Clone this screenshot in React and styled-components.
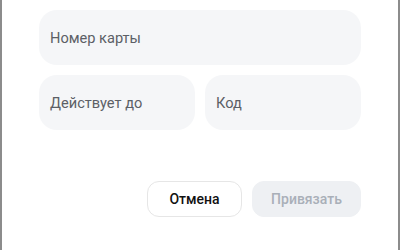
import styled, { createGlobalStyle } from "styled-components";

const Global = createGlobalStyle`
  html, body { margin: 0; padding: 0; background: #fff; }
  body { font-family: Roboto, "Liberation Sans", Arial, sans-serif; }
`;

const Frame = styled.div`
  box-sizing: border-box;
  width: 400px; height: 250px;
  border-left: 2px solid #8c8c8c; border-right: 2px solid #8c8c8c;
  padding: 10px 37px 0;
  display: flex; flex-direction: column;
`;
const Fields = styled.div`
  display: grid; grid-template-columns: 1fr 1fr; gap: 10px;
`;
const Field = styled.div`
  grid-column: ${p => (p.$wide ? "1 / -1" : "auto")};
  height: 55px; border-radius: 18px; background: #f5f6f8;
  display: flex; align-items: center; padding: 0 11px;
  font-size: 14.6px; color: #5c5f66;
`;
const Actions = styled.div`
  display: flex; justify-content: flex-end; gap: 10px; margin-top: 51px;
`;
const Button = styled.button`
  height: 36px; border-radius: 12px; font: inherit; font-size: 14px; font-weight: 500;
  padding: 0; width: ${p => p.$w}px;
  border: 1px solid ${p => (p.$disabled ? "#eef0f3" : "#e6e6e6")};
  background: ${p => (p.$disabled ? "#eef0f3" : "#fff")};
  color: ${p => (p.$disabled ? "#a9afb8" : "#111")};
`;

export default function App() {
  return (
    <>
      <Global />
      <Frame>
        <Fields>
          <Field $wide>Номер карты</Field>
          <Field>Действует до</Field>
          <Field>Код</Field>
        </Fields>
        <Actions>
          <Button $w={95}>Отмена</Button>
          <Button $w={109} $disabled>Привязать</Button>
        </Actions>
      </Frame>
    </>
  );
}
